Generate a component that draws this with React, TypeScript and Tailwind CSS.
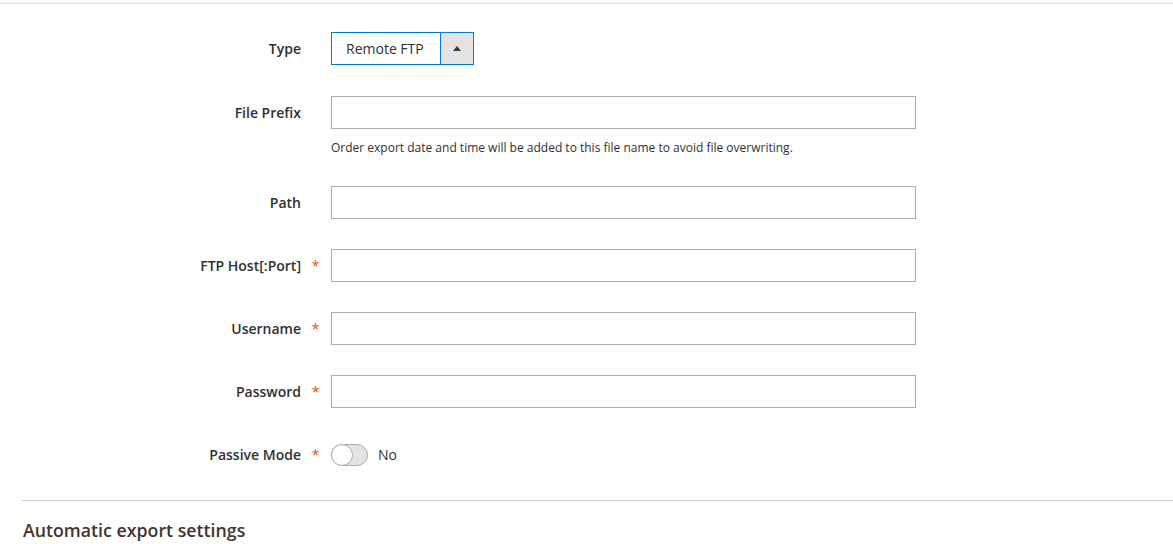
import React from "react";

const font = { fontFamily: '"Open Sans", "Noto Sans", sans-serif' };

function Row({
  label,
  required,
  children,
  className = "",
}: {
  label: string;
  required?: boolean;
  children: React.ReactNode;
  className?: string;
}) {
  return (
    <div className={`flex items-start ${className}`}>
      <div className="w-[301px] shrink-0 h-[33px] flex items-center justify-end text-[14px] font-semibold text-[#303030]">
        {label}
      </div>
      <div className="w-[30px] shrink-0 h-[33px] flex items-center justify-center text-[14px] text-[#eb5202] pr-[1px]">
        {required ? "*" : ""}
      </div>
      <div className="flex-none">{children}</div>
    </div>
  );
}

function TextInput() {
  return <div className="w-[585px] h-[33px] border border-[#adadad] bg-white" />;
}

export default function App() {
  return (
    <div className="w-[1173px] h-[544px] bg-white overflow-hidden" style={font}>
      <div className="h-[4px] bg-[#f7f7f7] border-b border-[#e3e3e3]" />
      <div className="pt-[28px]">
        <Row label="Type">
          <div className="flex w-[143px] h-[33px] border border-[#007bdb]">
            <div className="flex-1 flex items-center pl-[14px] text-[14px] text-[#303030]">
              Remote FTP
            </div>
            <div className="w-[33px] h-full bg-[#e3e3e3] border-l border-[#007bdb] flex items-center justify-center">
              <svg width="8" height="5" viewBox="0 0 8 5">
                <path d="M0 5 L4 0 L8 5 Z" fill="#41362f" />
              </svg>
            </div>
          </div>
        </Row>
        <Row label="File Prefix" className="mt-[31px]">
          <TextInput />
          <div className="mt-[11px] text-[12px] leading-[16px] text-[#303030]">
            Order export date and time will be added to this file name to avoid file overwriting.
          </div>
        </Row>
        <Row label="Path" className="mt-[30px]">
          <TextInput />
        </Row>
        <Row label="FTP Host[:Port]" required className="mt-[30px]">
          <TextInput />
        </Row>
        <Row label="Username" required className="mt-[30px]">
          <TextInput />
        </Row>
        <Row label="Password" required className="mt-[30px]">
          <TextInput />
        </Row>
        <Row label="Passive Mode" required className="mt-[30px]">
          <div className="h-[33px] flex items-center">
            <div className="relative w-[37px] h-[22px] rounded-full border border-[#adadad] bg-[#e3e3e3]">
              <div className="absolute left-[-1px] top-[-1px] w-[22px] h-[22px] rounded-full border border-[#adadad] bg-white" />
            </div>
            <span className="ml-[10px] text-[14px] text-[#303030]">No</span>
          </div>
        </Row>
      </div>
      <div className="ml-[22px] mt-[29px] border-t border-[#cccccc]" />
      <div className="ml-[23px] mt-[16px] text-[17.75px] font-semibold text-[#41362f]">
        Automatic export settings
      </div>
    </div>
  );
}
